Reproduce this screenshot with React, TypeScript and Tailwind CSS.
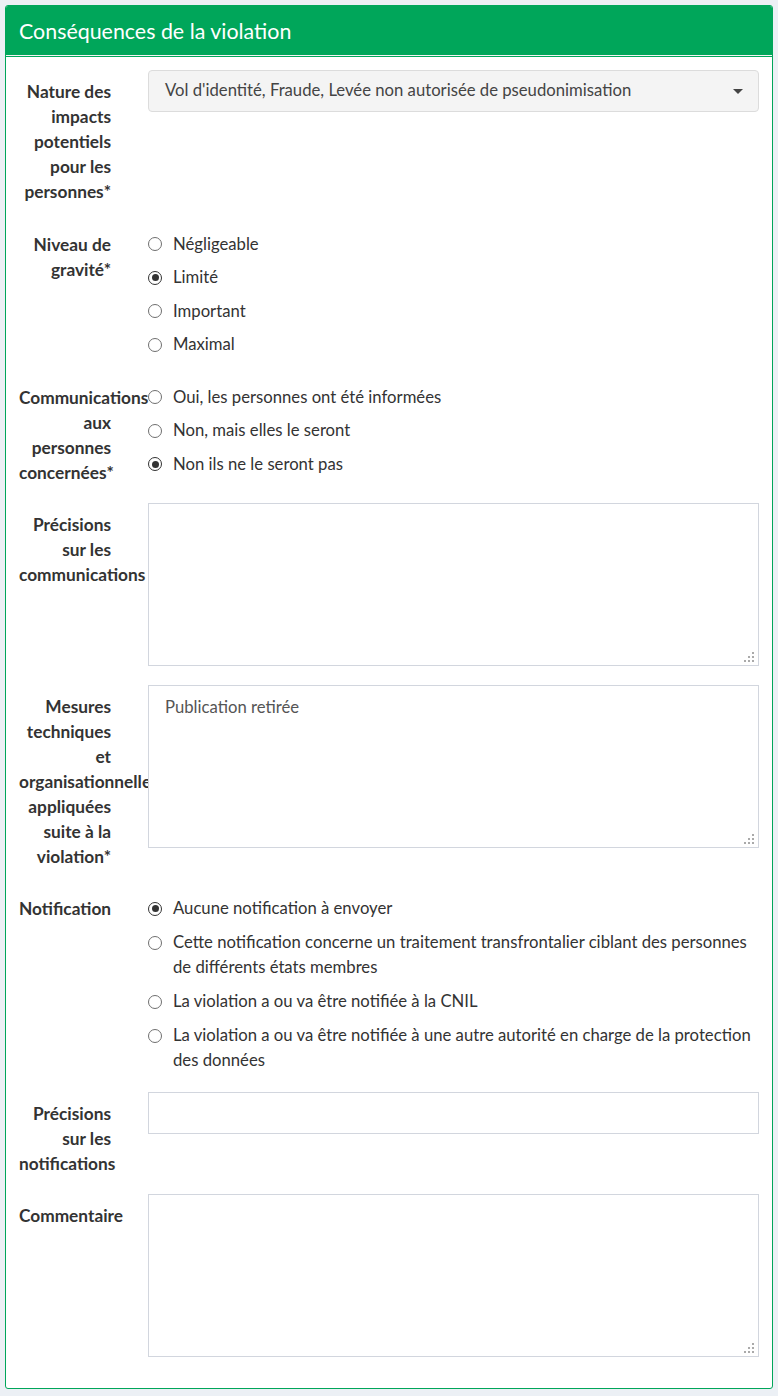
import React from "react";

const FONT = { fontFamily: "Lato, 'Liberation Sans', sans-serif" };

function Grip() {
  return (
    <svg
      className="absolute right-[4px] bottom-[3px]"
      width="10"
      height="10"
      viewBox="0 0 10 10"
    >
      <rect x="8" y="0" width="2" height="2" fill="#aaaaaa" />
      <rect x="4" y="4" width="2" height="2" fill="#aaaaaa" />
      <rect x="8" y="4" width="2" height="2" fill="#aaaaaa" />
      <rect x="0" y="8" width="2" height="2" fill="#aaaaaa" />
      <rect x="4" y="8" width="2" height="2" fill="#aaaaaa" />
      <rect x="8" y="8" width="2" height="2" fill="#aaaaaa" />
    </svg>
  );
}

function TextArea({ value }: { value?: string }) {
  return (
    <div className="relative z-10 h-[163px] w-full border border-[#d2d6de] bg-white">
      <div className="px-[16px] pt-[9px] text-[16.7px] leading-[25px] text-[#555]">
        {value || ""}
      </div>
      <Grip />
    </div>
  );
}

function Radio({ checked, label }: { checked?: boolean; label: string }) {
  return (
    <div className="flex items-start">
      <span
        className={
          "mt-[5.5px] flex h-[14px] w-[14px] shrink-0 items-center justify-center rounded-full bg-white " +
          (checked ? "border-[1.5px] border-[#333]" : "border border-[#6f6f6f]")
        }
      >
        {checked ? <span className="block h-[7px] w-[7px] rounded-full bg-[#333]" /> : null}
      </span>
      <span className="ml-[11px] text-[16.7px] leading-[25px] text-[#333]">{label}</span>
    </div>
  );
}

function Row({
  label,
  children,
  last,
}: {
  label: React.ReactNode;
  children: React.ReactNode;
  last?: boolean;
}) {
  return (
    <div className={"flex items-start " + (last ? "" : "mb-[18.5px]")}>
      <div className="w-[92px] shrink-0 pt-[9px] text-right text-[17.3px] font-bold leading-[25px] text-[#333]">
        {label}
      </div>
      <div className="relative ml-[37px] min-w-0 flex-1">{children}</div>
    </div>
  );
}

function RadioGroup({ children, wide }: { children: React.ReactNode; wide?: boolean }) {
  return (
    <div className={"flex flex-col pt-[9px] " + (wide ? "gap-[9px]" : "gap-[8.6px]")}>
      {children}
    </div>
  );
}

export default function App() {
  return (
    <div className="h-[1396px] w-[778px] bg-[#ecf0f5] px-[5px] pt-[5px]" style={FONT}>
      <div className="w-[768px] overflow-hidden rounded-[3px] border border-[#00a65a] bg-white">
        <div className="flex h-[49px] items-center bg-[#00a65a] pl-[13px] pt-[2px]">
          <span className="text-[21.4px] text-white">Conséquences de la violation</span>
        </div>
        <div className="h-px bg-[#f4f4f4]" />
        <div className="h-px bg-[#00a65a]" />
        <div className="px-[13px] pt-[13px] pb-[31px]">
          <Row label={<>Nature des impacts potentiels pour les personnes*</>}>
            <div className="flex h-[42px] items-center justify-between rounded-[4px] border border-[#dcdcdc] bg-[#f4f4f4] pl-[16px] pr-[15px]">
              <span className="text-[16.7px] text-[#444]">
                Vol d'identité, Fraude, Levée non autorisée de pseudonimisation
              </span>
              <svg width="10" height="5" viewBox="0 0 10 5">
                <path d="M0 0 L10 0 L5 5 Z" fill="#444" />
              </svg>
            </div>
          </Row>

          <Row label={<>Niveau de gravité*</>}>
            <RadioGroup>
              <Radio label="Négligeable" />
              <Radio checked label="Limité" />
              <Radio label="Important" />
              <Radio label="Maximal" />
            </RadioGroup>
          </Row>

          <Row label={<>Communications aux personnes concernées*</>}>
            <RadioGroup>
              <Radio label="Oui, les personnes ont été informées" />
              <Radio label="Non, mais elles le seront" />
              <Radio checked label="Non ils ne le seront pas" />
            </RadioGroup>
          </Row>

          <Row label={<>Précisions sur les communications</>}>
            <TextArea />
          </Row>

          <Row label={<>Mesures techniques et organisationnelles appliquées suite à la violation*</>}>
            <TextArea value="Publication retirée" />
          </Row>

          <Row label={<>Notification</>}>
            <RadioGroup wide>
              <Radio checked label="Aucune notification à envoyer" />
              <Radio label="Cette notification concerne un traitement transfrontalier ciblant des personnes de différents états membres" />
              <Radio label="La violation a ou va être notifiée à la CNIL" />
              <Radio label="La violation a ou va être notifiée à une autre autorité en charge de la protection des données" />
            </RadioGroup>
          </Row>

          <Row label={<>Précisions sur les notifications</>}>
            <div className="h-[42px] w-full border border-[#d2d6de] bg-white" />
          </Row>

          <Row label={<>Commentaire</>} last>
            <TextArea />
          </Row>
        </div>
      </div>
    </div>
  );
}
